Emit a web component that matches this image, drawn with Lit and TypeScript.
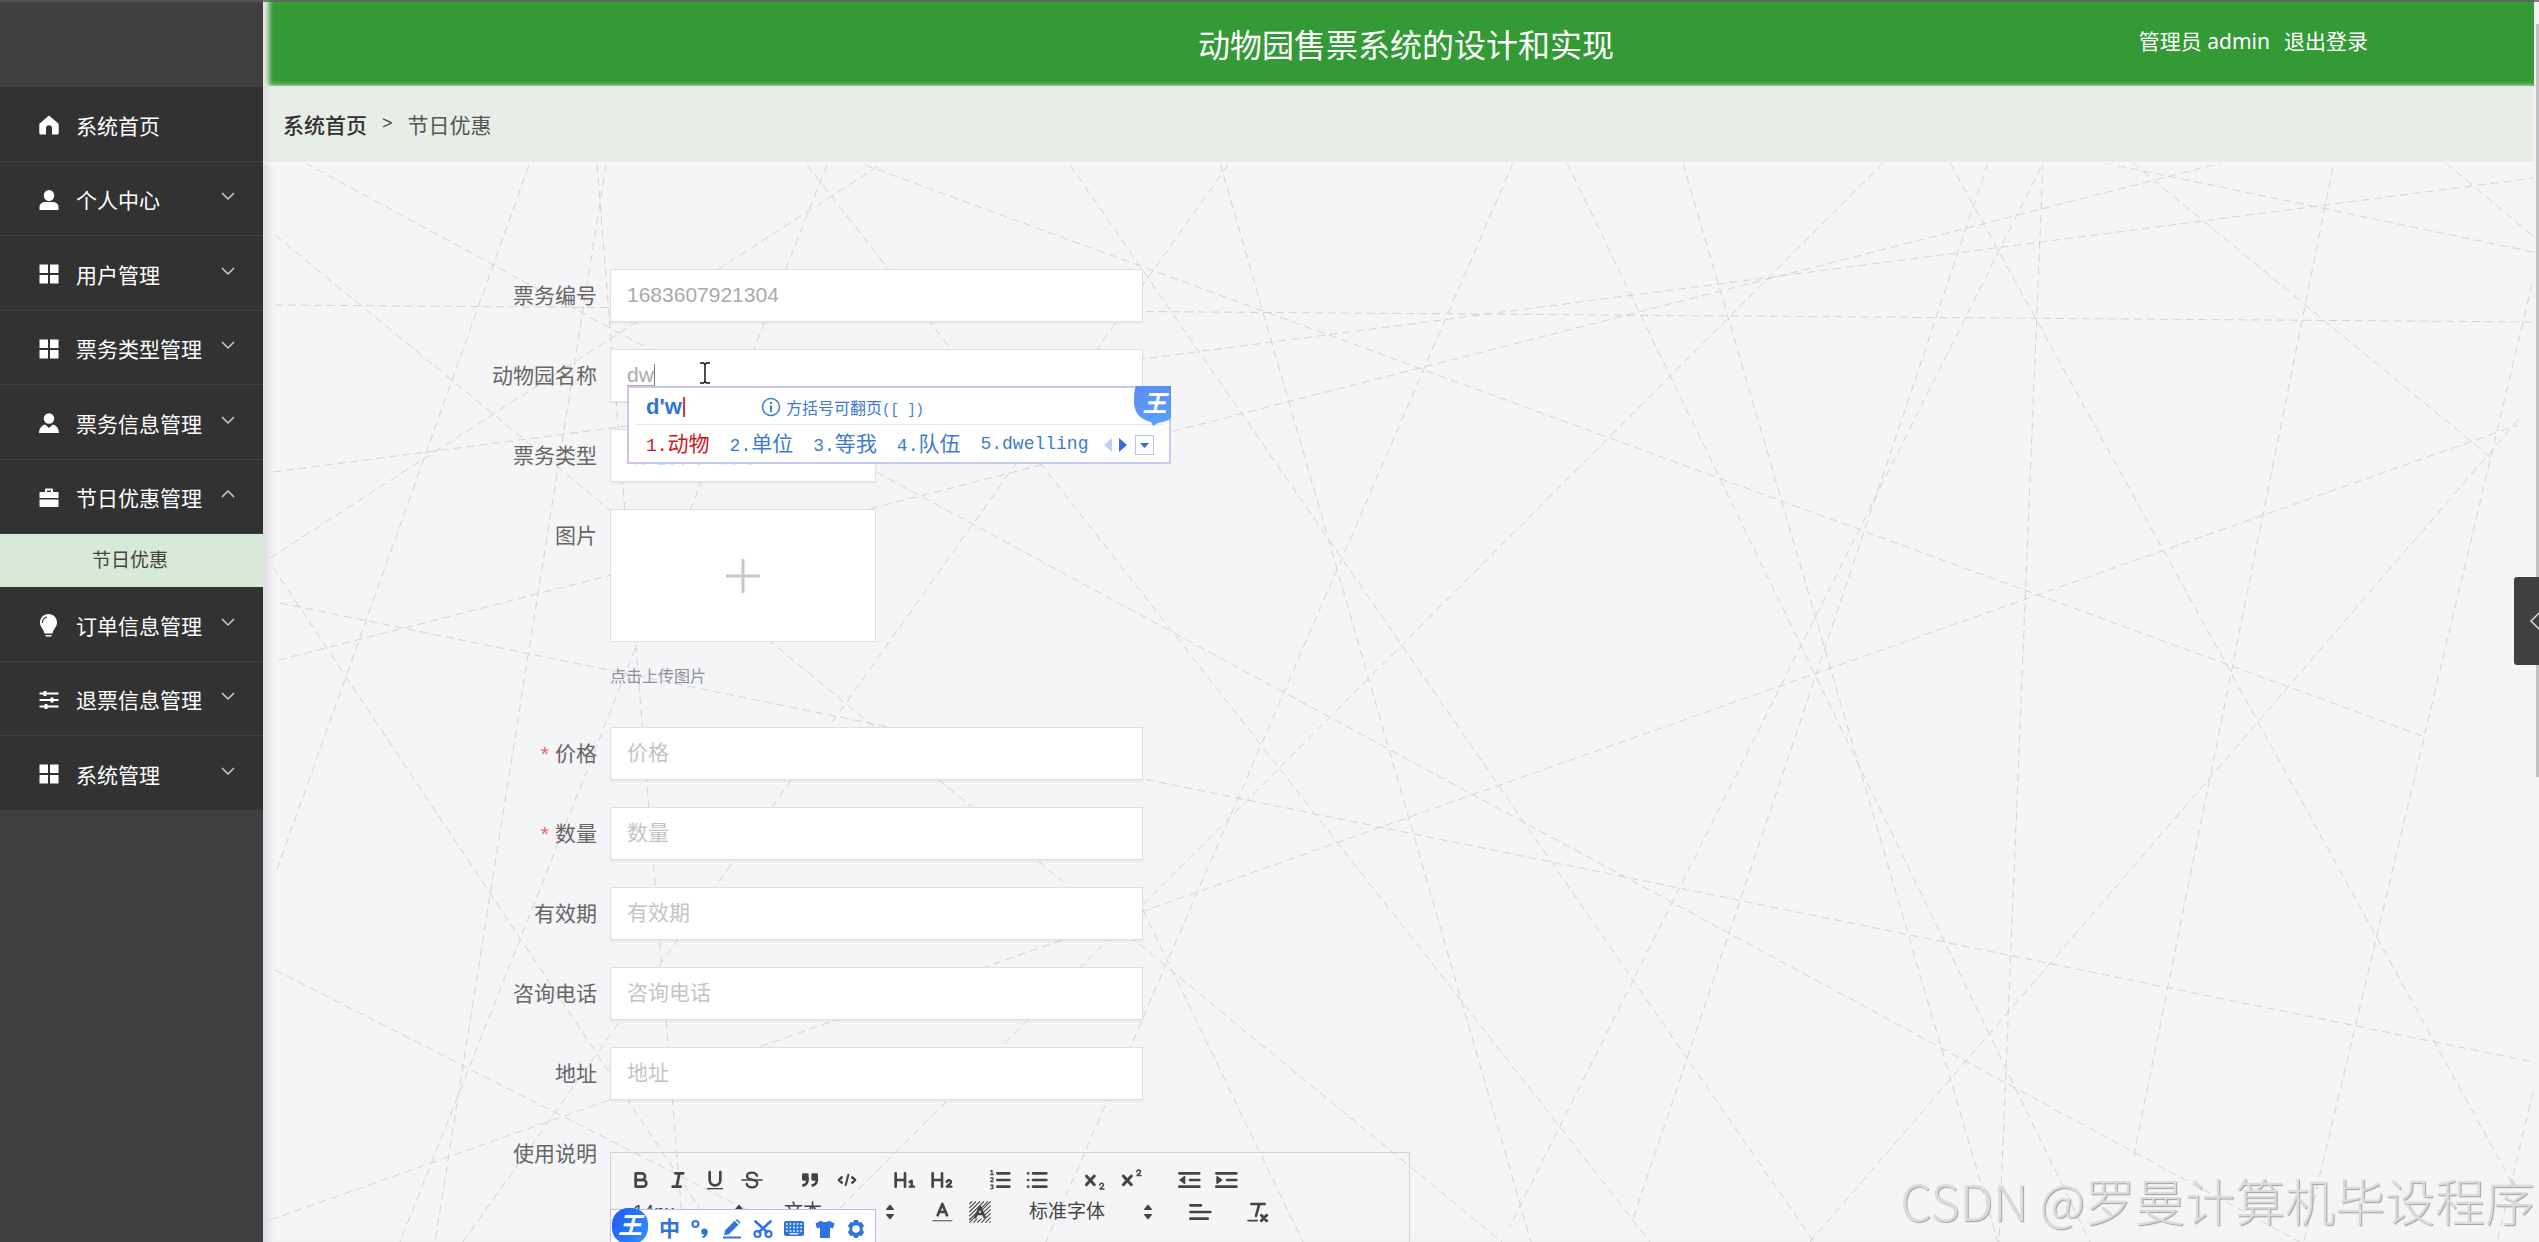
import { LitElement, html, svg, css, nothing } from "lit";
import { customElement, state } from "lit/decorators.js";

type MenuEntry = { label: string; icon: string; open?: boolean; children?: string[] };

const MENU: MenuEntry[] = [
  { label: "系统首页", icon: "home" },
  { label: "个人中心", icon: "user", children: [] },
  { label: "用户管理", icon: "grid", children: [] },
  { label: "票务类型管理", icon: "grid", children: [] },
  { label: "票务信息管理", icon: "custom", children: [] },
  { label: "节日优惠管理", icon: "case", open: true, children: ["节日优惠"] },
  { label: "订单信息管理", icon: "bulb", children: [] },
  { label: "退票信息管理", icon: "sliders", children: [] },
  { label: "系统管理", icon: "grid", children: [] },
];

const MENU_ICONS: Record<string, unknown> = {
  home: svg`<path d="M10 0.5 19.3 8.6a1.2 1.2 0 0 1 .4.9V18a1.5 1.5 0 0 1-1.5 1.5H13v-6.2a3 3 0 0 0-6 0v6.2H1.800a1.5 1.5 0 0 1-1.500-1.500V9.500a1.200 1.200 0 0 1 .4-.9Z"/>`,
  user: svg`<ellipse cx="10" cy="5.500" rx="5.200" ry="5.500"/><path d="M.5 20v-3.500c0-2.500 2.500-4 5-4.500h9c2.500.5 5 2 5 4.500V20Z"/>`,
  grid: svg`<path d="M.5.5h8.500v8.500H.5ZM11 .5h8.500v8.500H11ZM.5 11h8.500v8.500H.5ZM11 11h8.500v8.500H11Z"/>`,
  custom: svg`<circle cx="10" cy="5.500" r="5.200"/><path d="M0 20c0-5 3-7.500 6-8.500l4 3.500 4-3.500c3 1 6 3.500 6 8.500Z"/>`,
  case: svg`<path d="M6 4V1.500C6 .9 6.400.5 7 .5h6c.6 0 1 .4 1 1V4h4.500c.6 0 1 .4 1 1v5H.5V5c0-.6.4-1 1-1ZM8 4h4V2.500H8ZM.5 11.500h19V18c0 .6-.4 1-1 1h-17c-.6 0-1-.4-1-1Z"/>`,
  bulb: svg`<path d="M9.500-1C4.500-1 1 2.700 1 7.500c0 4.500 3.500 6 4.500 11h8c1-5 4.500-6.500 4.500-11C18 2.700 14.500-1 9.500-1Z"/><path d="M6.500 20h6v1.500h-6z"/><path d="M3.500 8C3.500 4.500 5.500 2.500 8 2" fill="none" stroke="#323232" stroke-width="1.200"/>`,
  sliders: svg`<path d="M.5 2.500h4V1h3v1.500h12v2h-12V6h-3V4.500h-4ZM.5 9h11V7.500h3V9h5v2h-5v1.500h-3V11H.5ZM.5 15.500h5V14h3v1.500h11v2h-11V19h-3v-1.500h-5Z"/>`,
};

/* End points of the dashed web behind the form, in page units. */
const WEB: number[][] = [
  [305, 163, 2300, 1242], [275, 235, 1502, 1242], [275, 305, 2533, 322], [529, 165, 275, 875],
  [597, 165, 684, 1242], [606, 165, 435, 1242], [827, 165, 400, 1242], [273, 472, 2533, 178],
  [270, 558, 880, 165], [273, 567, 722, 1242], [280, 603, 2533, 1062], [279, 660, 2221, 163],
  [1228, 165, 463, 1242], [807, 165, 1650, 1242], [1220, 163, 1531, 1242], [1070, 165, 1814, 1242],
  [1513, 163, 1046, 1242], [1883, 163, 806, 1242], [270, 1220, 2518, 425], [865, 165, 2428, 738],
  [275, 970, 810, 1242], [1143, 910, 1303, 1242], [1567, 163, 2090, 1242], [1683, 163, 1998, 1242],
  [1950, 163, 2511, 1181], [2043, 163, 1999, 1242], [1988, 163, 1632, 1222], [2041, 167, 1510, 1226],
  [2333, 167, 2133, 1160], [2532, 284, 2304, 1242], [2519, 419, 1810, 1242], [2105, 163, 2533, 252],
  [2133, 163, 2490, 457], [2446, 163, 2533, 236], [2533, 1092, 2497, 1242],
];

const INK = "#444";
const line = (d: string, w = 2) =>
  svg`<path d=${d} fill="none" stroke=${INK} stroke-width=${w} stroke-linecap="round" stroke-linejoin="round"/>`;

const TOOLS: Record<string, unknown> = {
  "加粗": svg`${line("M5 4h4.500A2.500 2.500 0 0 1 12 6.500v0A2.500 2.500 0 0 1 9.500 9H5V4Z")}${line("M5 9h5.500A2.500 2.500 0 0 1 13 11.500v0A2.500 2.500 0 0 1 10.500 14H5V9Z")}`,
  "斜体": svg`${line("M7 4h6M5 14h6M8 14l2-10")}`,
  "下划线": svg`${line("M5 3v6a4 4 0 0 0 8 0V3")}<rect fill=${INK} x="3" y="15" width="12" height="1"/>`,
  "删除线": svg`${line("M12.800 5.800C12 3.900 10.600 3.500 9 3.500c-2.200 0-3.700 1-3.700 2.600C5.300 9.500 13 8 13 11.500c0 1.800-1.700 3-4 3-2.200 0-3.700-.9-4-2.600", 1.700)}${line("M1.500 9h15", 1)}`,
  "引用": svg`<path fill=${INK} stroke=${INK} d="M4 5h3v3.500H4ZM11 5h3v3.500h-3Z" stroke-width="2" stroke-linejoin="round"/>${line("M7.200 8c0 2.500-1 4.500-3.200 5M14.200 8c0 2.500-1 4.500-3.200 5")}`,
  "代码": svg`${line("M5 7 3 9l2 2M13 7l2 2-2 2", 2)}${line("M10 5 8 13", 1.500)}`,
  "标题一": svg`${line("M2 4v10M9 4v10M2 9h7")}${line("M12.500 10.500 14 9.500V14M12.500 14h3.200", 1.800)}`,
  "标题二": svg`${line("M2 4v10M9 4v10M2 9h7")}${line("M12.500 10.500c.2-1 1-1.300 1.700-1.300 1 0 1.800.6 1.500 1.600C15.400 12 13.500 12.700 12.700 14h3.400", 1.800)}`,
  "有序列表": svg`${line("M7 4h9M7 9h9M7 14h9")}${line("M2 2.300 3 1.800v3M2 5h2M2 7.700c1.500-1 2.500.2 1.500 1L2 10.300h2.200M2 12.800h1.800L3 14c1.500 0 1.300 2-.9 1.500", 0.900)}`,
  "无序列表": svg`${line("M6 4h10M6 9h10M6 14h10M2.300 4h.1M2.300 9h.1M2.300 14h.1")}`,
  "下标": svg`${line("M2.500 6l6 6.500M8.500 6l-6 6.500", 2.200)}${line("M12.500 12.700c.3-1 1-1.200 1.500-1.200 1 0 1.500.6 1.300 1.400-.2.900-1.700 1.500-2.500 2.800h3", 1.100)}`,
  "上标": svg`${line("M2.500 6l6 6.500M8.500 6l-6 6.500", 2.200)}${line("M12.500 2.700c.3-1 1-1.200 1.500-1.200 1 0 1.500.6 1.300 1.400-.2.900-1.700 1.500-2.500 2.800h3", 1.100)}`,
  "减少缩进": svg`${line("M1 4h15M1 14h15M9 9h7")}<path d="M5 6.500v5L1.500 9Z" fill=${INK} stroke=${INK} stroke-linejoin="round"/>`,
  "增加缩进": svg`${line("M1 4h15M1 14h15M9 9h7")}<path d="M1.500 6.500v5L5 9Z" fill=${INK} stroke=${INK} stroke-linejoin="round"/>`,
  "文字颜色": svg`<rect x="1" y="15" width="15" height="1" fill="#777"/>${line("M5 11.500 8.500 3l3.500 8.500M6.500 9h4")}`,
  "背景颜色": svg`<path d="M1 3l2-2M1 6l5-5M1 9l8-8M1 12 12 1M1 15 15 1M1 17 17 1M4 17 17 4M7 17 17 7M10 17l7-7M13 17l4-4M16 17l1-1" stroke=${INK} stroke-width=".8"/><path d="M4.500 14 9 4l4.500 10Z" fill="#f5f5f7"/>${line("M5.500 13 9 5l3.500 8M7 10.500h4")}`,
  "对齐": svg`${line("M1 9h15M1 14h13M1 4h8")}`,
  "清除格式": svg`${line("M4 3h10M10 3 7.500 12", 2)}${line("M1.500 15.500h7", 1.200)}${line("M11.500 11.500l4 4M15.500 11.500l-4 4", 2.200)}`,
};

const IME_ICONS: Record<string, unknown> = {
  "标点": svg`<circle cx="4.500" cy="5" r="3" fill="none" stroke="currentColor" stroke-width="2"/><path d="M13.500 9.500a3.200 3.200 0 0 1 3.300 3.400c0 3-2 5.200-5.200 6.100l-.6-1.400c1.300-.5 2-1.100 2.200-1.900a3.100 3.100 0 0 1 .3-6.200Z"/>`,
  "手写": svg`<path d="M3 11.500 12.500 1.800l4 4L7 15.300l-5 .9Z"/><path d="M13.500 1 15 0l3.500 3.500-1 1.300Z"/><path d="M1 17.500h18v2H1Z"/>`,
  "剪切": svg`<circle cx="4.500" cy="15" r="3" fill="none" stroke="currentColor" stroke-width="2.200"/><circle cx="15.500" cy="15" r="3" fill="none" stroke="currentColor" stroke-width="2.200"/><path d="M2.500 2.500 14 13M17.500 2.500 6 13" stroke="currentColor" stroke-width="2.600" stroke-linecap="round"/>`,
  "键盘": svg`<rect x="0" y="2" width="20" height="15" rx="2"/><path d="M2 5h16M2 8.500h16M2 12h16" stroke="#fff" stroke-width="1.700" stroke-dasharray="1.700 1.870"/><path d="M5.500 14.800h9" stroke="#fff" stroke-width="1.300"/>`,
  "皮肤": svg`<path d="M6 1.500c1 2 7 2 8 0l5.500 3L18 9.500l-3-1V19H5V8.500l-3 1L.5 4.500Z"/>`,
  "设置": svg`<path fill-rule="evenodd" d="M8 1h4l.8 2.500 2.600-.6 2.800 4L16.500 8.700v2.600l1.700 1.800-2.800 4-2.600-.6L12 19H8l-.8-2.500-2.600.6-2.800-4 1.700-1.800V8.700L1.800 6.900l2.800-4 2.600.6ZM10 6.200a3.800 3.800 0 1 0 0 7.600 3.800 3.800 0 0 0 0-7.600Z"/>`,
};

@customElement("app-root")
export class AppRoot extends LitElement {
  static styles = css`
    :host {
      display: block;
      font-family: "Liberation Sans", "Noto Sans CJK SC", sans-serif;
      font-size: 21px;
      color: #666;
    }
    * { box-sizing: border-box; }
    button, input, select { font: inherit; color: inherit; }
    button { background: none; border: 0; padding: 0; cursor: pointer; }
    a { color: inherit; text-decoration: none; }
    svg { display: block; }
    ul { list-style: none; margin: 0; padding: 0; }

    .app {
      position: relative;
      display: grid;
      grid-template-columns: 263px 1fr 5px;
      height: 100vh;
      overflow: hidden;
      background: #f5f5f7;
    }
    .topline {
      position: absolute;
      inset: 0 0 auto 0;
      height: 2px;
      background: rgba(90, 90, 90, 0.75);
      z-index: 3;
    }

    .side { background: #403e41; padding-top: 87px; }
    .entry {
      display: flex;
      align-items: center;
      width: 100%;
      height: 6vh;
      padding: 2px 27px 0 39px;
      gap: 17px;
      background: #323232;
      border-bottom: 1px solid #403f42;
      color: #fff;
      text-align: left;
    }
    .entry .name { flex: 1; white-space: nowrap; }
    .entry .glyph { width: 20px; height: 20px; margin-top: 1px; fill: #fff; overflow: visible; }
    .entry .arrow { width: 16px; height: 16px; margin-bottom: 6px; }
    .sub {
      display: block;
      height: 53px;
      line-height: 54px;
      padding-left: 92px;
      background: #d7e9d7;
      color: #444;
      font-size: 19px;
    }

    .main {
      position: relative;
      display: flex;
      flex-direction: column;
      min-width: 0;
      overflow: hidden;
    }
    .head {
      display: grid;
      grid-template-columns: 1fr auto 1fr;
      align-items: center;
      height: 86px;
      flex: none;
      padding: 6px 166px 0 181px;
      background: #349a36;
      color: #fff;
      box-shadow: inset 8px 0 5px -2px #e4e6e4;
    }
    .title { grid-column: 2; margin: 0; font-size: 32px; font-weight: 400; line-height: 40px; }
    .account {
      display: flex;
      justify-content: flex-end;
      gap: 14px;
      padding-bottom: 10px;
      font-family: "Noto Sans", "Noto Sans CJK SC", sans-serif;
      line-height: 30px;
    }
    .crumbs {
      position: relative;
      display: flex;
      align-items: center;
      gap: 15px;
      flex: none;
      height: 76px;
      padding: 0 20px 1px;
      background: #e6eee6;
      color: #555;
      box-shadow: 0 1px 6px #fff, inset 7px 0 4px -2px #e1dfe2;
      z-index: 1;
    }
    .crumbs .root { color: #303133; font-weight: 500; }
    .crumbs .sep { font-size: 18px; color: #444; }

    .page { position: relative; flex: 1; min-height: 0; box-shadow: inset 9px 0 6px -3px #dfdde1; }
    .web { position: absolute; inset: 0; width: 100%; height: 100%; }

    .form { position: relative; padding: 107px 0 0 120px; }
    .row {
      display: grid;
      grid-template-columns: 214px 1fr;
      column-gap: 13px;
      margin-bottom: 27px;
    }
    .label { line-height: 54px; height: 53px; text-align: right; }
    .star { color: #e66; margin-right: 6px; }
    .field { position: relative; max-width: 533px; }
    .box {
      display: block;
      width: 100%;
      height: 53px;
      padding: 0 16px 2px;
      background: #fff;
      border: 1px solid #e0e0e2;
      border-radius: 0;
      outline: 0;
      color: #aaa;
      box-shadow: 0 2px 2px rgba(0, 0, 0, 0.05);
    }
    .box::placeholder { color: #c4c4c8; opacity: 1; }
    select.box { width: 266px; padding-bottom: 3px; color: #c4c4c8; appearance: none; }
    .upload {
      display: flex;
      align-items: center;
      justify-content: center;
      width: 266px;
      height: 133px;
      background: #fff;
      border: 1px solid #e0e0e2;
    }
    .hint { margin: 25px 0 13px; font-size: 16px; line-height: 20px; color: #8a8f99; }

    .compose { position: absolute; left: 17px; top: 36px; width: 27px; height: 2px; background: #aaa; }
    .caret { position: absolute; left: 44px; top: 15px; width: 1px; height: 22px; background: #777; }
    .ibeam { position: absolute; left: 89px; top: 13px; }

    .ime {
      position: absolute;
      left: 17px;
      top: 37px;
      width: 544px;
      height: 78px;
      background: #fff;
      border: 2px solid #c5c8f2;
      color: #3f7bcb;
      z-index: 2;
    }
    .ime-top {
      display: flex;
      align-items: center;
      height: 37px;
      margin: 0 6px;
      padding: 2px 0 0 11px;
      border-bottom: 1px solid #e6e6f0;
    }
    .typed {
      width: 115px;
      font-size: 22px;
      font-weight: 700;
      color: #2f74dd;
      line-height: 22px;
    }
    .typed i { display: inline-block; width: 2px; height: 20px; margin-left: 1px; background: #d33; vertical-align: -3px; }
    .tip { margin-left: 5px; font-size: 16px; }
    .mono { font-family: "Liberation Mono", monospace; font-size: 14px; }
    .cands { display: flex; align-items: center; height: 37px; padding: 2px 0 0 17px; }
    .cands ol { display: flex; gap: 20px; list-style: none; margin: 0; padding: 0; }
    .cands li { display: flex; align-items: baseline; line-height: 30px; white-space: nowrap; }
    .cands li span { font-family: "Liberation Mono", monospace; font-size: 18px; }
    .cands .first { color: #c8181e; }
    .pager { margin-left: 16px; }
    .badge { position: absolute; right: -2px; top: -2px; width: 37px; height: 40px; }
    .badge span {
      position: absolute;
      inset: 0;
      padding-left: 4px;
      color: #fff;
      font-size: 24px;
      font-style: italic;
      font-weight: 700;
      line-height: 36px;
      text-align: center;
    }

    .editor {
      display: flex;
      flex-direction: column;
      width: 800px;
      min-height: 300px;
      margin-top: 25px;
      padding: 11px;
      border: 1px solid #d2d2d4;
    }
    .tools { display: flex; gap: 20px; height: 32px; }
    .group { display: flex; }
    .tool { display: grid; place-items: center; width: 37px; height: 32px; }
    .tool svg { width: 24px; height: 24px; }
    .pick {
      display: flex;
      align-items: center;
      justify-content: space-between;
      width: 131px;
      padding: 0 2px 0 11px;
      color: #444;
      font-size: 19px;
      line-height: 30px;
    }
    .pick.wide { width: 144px; }
    .tools.head-row { gap: 21px; }

    .rail { position: relative; background: #f3f2f4; padding: 24px 0 0 2px; }
    .thumb { height: 753px; background: #c1c0c2; }
    .drawer {
      position: absolute;
      right: 0;
      top: 577px;
      width: 25px;
      height: 88px;
      background: #404040;
      border-radius: 3px 0 0 3px;
      z-index: 4;
    }

    .imebar {
      position: absolute;
      left: 610px;
      bottom: 0;
      display: flex;
      align-items: center;
      gap: 11px;
      height: 33px;
      padding: 5px 9px 0 1px;
      background: #fff;
      border: 1px solid #b5bcf0;
      border-bottom: 0;
      color: #2f74dd;
      z-index: 3;
    }
    .imebar .brand {
      width: 36px;
      height: 36px;
      margin-top: -5px;
      border-radius: 16px;
      background: linear-gradient(120deg, #2156f0, #2f95ff);
      color: #fff;
      font-size: 24px;
      font-style: italic;
      font-weight: 700;
      line-height: 34px;
    }
    .imebar button { min-width: 20px; line-height: 24px; font-weight: 700; }
    .imebar button svg { width: 20px; height: 20px; fill: currentColor; }

    .mark {
      position: absolute;
      right: 4px;
      bottom: 6px;
      font-family: "Noto Sans CJK SC", sans-serif;
      font-size: 50px;
      font-weight: 300;
      line-height: 74px;
      color: #dcdcdc;
      text-shadow: 1px 1px 1px #a0a0a0;
      white-space: nowrap;
      z-index: 2;
    }
  `;

  @state() private menu = MENU;

  private toggle(target: MenuEntry) {
    this.menu = this.menu.map((m) => (m === target && m.children ? { ...m, open: !m.open } : m));
  }

  private entry(m: MenuEntry) {
    return html`<li>
      <button class="entry" type="button" @click=${() => this.toggle(m)}>
        <svg class="glyph" viewBox="0 0 20 20" aria-hidden="true">${MENU_ICONS[m.icon]}</svg>
        <span class="name">${m.label}</span>
        ${m.children
          ? html`<svg class="arrow" viewBox="0 0 16 16" fill="none" stroke="#ccc" stroke-width="1.500" aria-hidden="true">
              <path d=${m.open ? "M2 11l6-6 6 6" : "M2 5l6 6 6-6"} />
            </svg>`
          : nothing}
      </button>
      ${m.open ? m.children?.map((c) => html`<a class="sub" href="#">${c}</a>`) : nothing}
    </li>`;
  }

  private textRow(id: string, label: string, required = false) {
    return html`<div class="row">
      <label class="label" for=${id}>${required ? html`<span class="star">*</span>` : nothing}${label}</label>
      <div class="field"><input class="box" id=${id} placeholder=${label} /></div>
    </div>`;
  }

  private group(...names: string[]) {
    return html`<div class="group">
      ${names.map(
        (n) => html`<button class="tool" type="button" aria-label=${n}><svg viewBox="0 0 18 18">${TOOLS[n]}</svg></button>`
      )}
    </div>`;
  }

  private picker(text: string, wide = false) {
    return html`<button class="pick ${wide ? "wide" : ""}" type="button">
      ${text}
      <svg width="24" height="24" viewBox="0 0 18 18" fill="#444" stroke="#444" stroke-linejoin="round" aria-hidden="true">
        <path d="M6.500 7 9 4l2.500 3ZM6.500 11 9 14l2.500-3Z" />
      </svg>
    </button>`;
  }

  private candidates() {
    const words = [["1.", "动物"], ["2.", "单位"], ["3.", "等我"], ["4.", "队伍"]];
    return html`<div class="ime">
      <div class="ime-top">
        <span class="typed">d'w<i></i></span>
        <svg width="20" height="20" viewBox="0 0 20 20" fill="none" stroke="#3f7bcb" stroke-width="1.500" aria-hidden="true">
          <circle cx="10" cy="10" r="8.500" />
          <path d="M10 8.500V15M10 5v2" stroke-width="2" />
        </svg>
        <span class="tip">方括号可翻页<span class="mono">([ ])</span></span>
      </div>
      <div class="cands">
        <ol>
          ${words.map(([n, w], i) => html`<li class=${i === 0 ? "first" : ""}><span>${n}</span>${w}</li>`)}
          <li><span>5.dwelling</span></li>
        </ol>
        <svg class="pager" width="51" height="20" viewBox="0 0 51 20" aria-hidden="true">
          <path d="M8 3v14L0 10Z" fill="#c3cff2" />
          <path d="M15 3v14l8-7Z" fill="#2f6fd6" />
          <rect x="31.500" y=".5" width="18" height="19" fill="#fff" stroke="#b9c4ec" />
          <path d="M36 8h9l-4.500 5Z" fill="#2f6fd6" />
        </svg>
      </div>
      <div class="badge">
        <svg width="37" height="40" viewBox="0 0 37 40" aria-hidden="true">
          <defs>
            <linearGradient id="badge" x1="0" y1="0" x2="0" y2="1">
              <stop offset="0" stop-color="#5b8df0" /><stop offset="1" stop-color="#57a2ff" />
            </linearGradient>
          </defs>
          <path d="M2 0h35v32c-3 3-8 4-13 5l-5 3-2-4C7 34 0 27 0 16 0 10 0 4 2 0Z" fill="url(#badge)" />
        </svg>
        <span>王</span>
      </div>
    </div>`;
  }

  render() {
    return html`<div class="app">
      <div class="topline"></div>
      <nav class="side"><ul>${this.menu.map((m) => this.entry(m))}</ul></nav>

      <main class="main">
        <header class="head">
          <h1 class="title">动物园售票系统的设计和实现</h1>
          <div class="account"><span>管理员 admin</span><a href="#">退出登录</a></div>
        </header>
        <div class="crumbs">
          <a class="root" href="#">系统首页</a><span class="sep">&gt;</span><span>节日优惠</span>
        </div>
        <section class="page">
          <svg class="web" viewBox="263 162 2271 1080" preserveAspectRatio="xMinYMin slice" aria-hidden="true">
            <g stroke="#d3d3d3" stroke-width="1" stroke-dasharray="8 5">
              ${WEB.map(([a, b, c, d]) => svg`<line x1=${a} y1=${b} x2=${c} y2=${d} />`)}
            </g>
          </svg>
          <form class="form" @submit=${(e: Event) => e.preventDefault()}>
            <div class="row">
              <label class="label" for="code">票务编号</label>
              <div class="field"><input class="box" id="code" readonly .value=${"1683607921304"} /></div>
            </div>
            <div class="row">
              <label class="label" for="zoo">动物园名称</label>
              <div class="field">
                <input class="box" id="zoo" .value=${"dw"} />
                <span class="compose"></span><span class="caret"></span>
                <svg class="ibeam" width="12" height="22" viewBox="0 0 12 22" fill="none" stroke="#111" stroke-width="1.500" aria-hidden="true">
                  <path d="M1 1h3.500L6 2.500 7.500 1H11M6 2.500v17M1 21h3.500L6 19.500 7.500 21H11" />
                </svg>
                ${this.candidates()}
              </div>
            </div>
            <div class="row">
              <label class="label" for="kind">票务类型</label>
              <div class="field"><select class="box" id="kind"><option>请选择票务类型</option></select></div>
            </div>
            <div class="row">
              <span class="label">图片</span>
              <div class="field">
                <button class="upload" type="button" aria-label="上传图片">
                  <svg width="36" height="36" viewBox="0 0 36 36" stroke="#c8c8ca" stroke-width="3"><path d="M18 1v34M1 18h34" /></svg>
                </button>
                <p class="hint">点击上传图片</p>
              </div>
            </div>
            ${this.textRow("price", "价格", true)} ${this.textRow("count", "数量", true)}
            ${this.textRow("valid", "有效期")} ${this.textRow("phone", "咨询电话")} ${this.textRow("addr", "地址")}
            <div class="row">
              <span class="label">使用说明</span>
              <div class="editor">
                <div class="tools head-row">
                  ${this.group("加粗", "斜体", "下划线", "删除线")} ${this.group("引用", "代码")}
                  ${this.group("标题一", "标题二")} ${this.group("有序列表", "无序列表")}
                  ${this.group("下标", "上标")} ${this.group("减少缩进", "增加缩进")}
                </div>
                <div class="tools">
                  ${this.picker("14px")} ${this.picker("文本")} ${this.group("文字颜色", "背景颜色")}
                  ${this.picker("标准字体", true)} ${this.group("对齐")} ${this.group("清除格式")}
                </div>
              </div>
            </div>
          </form>
        </section>
      </main>

      <div class="rail"><div class="thumb"></div></div>
      <button class="drawer" type="button" aria-label="展开">
        <svg width="25" height="88" viewBox="0 0 25 88" fill="none" stroke="#ddd" stroke-width="1.500"><path d="M26 35l-9 9 9 9" /></svg>
      </button>

      <div class="imebar">
        <button class="brand" type="button">王</button>
        <button type="button">中</button>
        ${Object.entries(IME_ICONS).map(
          ([n, i]) => html`<button type="button" aria-label=${n}><svg viewBox="0 0 20 20">${i}</svg></button>`
        )}
      </div>
      <div class="mark">CSDN @罗曼计算机毕设程序</div>
    </div>`;
  }
}
